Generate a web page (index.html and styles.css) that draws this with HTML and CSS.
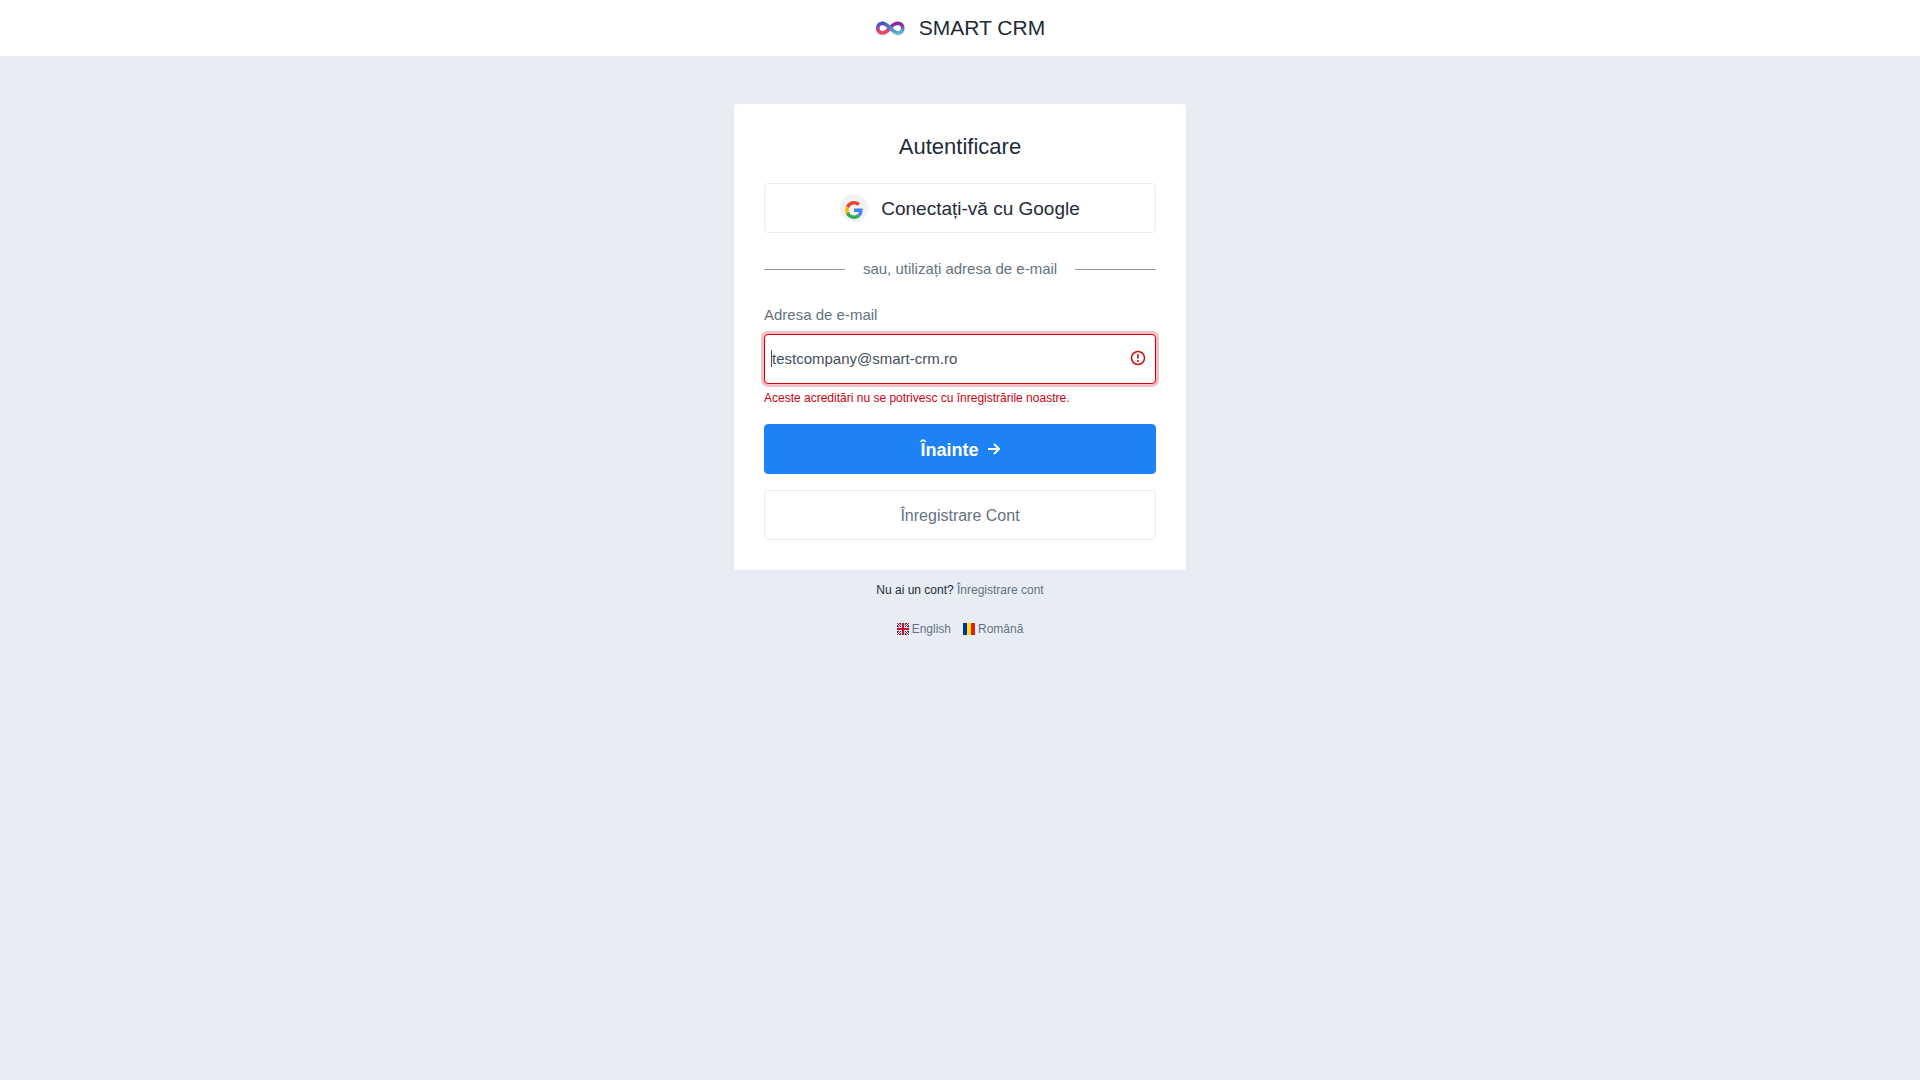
FILE: index.html
```html
<!DOCTYPE html>
<html lang="ro">
<head>
<meta charset="utf-8">
<meta name="viewport" content="width=device-width, initial-scale=1">
<title>Autentificare - SMART CRM</title>
<link rel="stylesheet" href="styles.css">
</head>
<body>
<header class="topbar">
  <a class="brand" href="#">
    <svg class="brand-logo" viewBox="0 0 30 18" aria-hidden="true">
      <defs>
        <linearGradient id="left" x1="0" y1="0" x2="0" y2="1">
          <stop offset="0.15" stop-color="#5a4fc0"/>
          <stop offset="0.5" stop-color="#8a4aa8"/>
          <stop offset="0.85" stop-color="#ee4560"/>
        </linearGradient>
        <linearGradient id="right" x1="0" y1="0" x2="0" y2="1">
          <stop offset="0.15" stop-color="#8a2c9c"/>
          <stop offset="0.5" stop-color="#6a62b8"/>
          <stop offset="0.85" stop-color="#5cb4cc"/>
        </linearGradient>
        <linearGradient id="strand" x1="0" y1="0" x2="1" y2="1">
          <stop offset="0" stop-color="#4b50c4"/>
          <stop offset="1" stop-color="#5ab2cc"/>
        </linearGradient>
      </defs>
      <g fill="none" stroke-width="3.600" stroke-linecap="round">
        <g stroke="#b4b6c0" transform="translate(0 1)" opacity=".6">
          <path d="M15 9C12 12.500 10.500 13.800 7.500 13.800A4.800 4.800 0 0 1 7.500 4.200"/>
          <path d="M7.500 4.200C13 4.200 17.500 13.800 23 13.800A4.800 4.800 0 0 0 23 4.200"/>
        </g>
        <path d="M15 9C18 5.500 19.500 4.200 23 4.200A4.800 4.800 0 0 1 23 13.800" stroke="url(#right)"/>
        <path d="M15 9C12 12.500 10.500 13.800 7.500 13.800A4.800 4.800 0 0 1 7.500 4.200" stroke="url(#left)"/>
        <path d="M7.500 4.200C13 4.200 17.500 13.800 23 13.800" stroke="url(#strand)"/>
      </g>
    </svg>
    <span>SMART CRM</span>
  </a>
</header>
<main class="page">
  <section class="card">
    <h1 class="title">Autentificare</h1>
    <button class="btn btn-google" type="button">
      <span class="google-badge">
        <svg class="google-mark" viewBox="0 0 48 48" aria-hidden="true">
          <path fill="#EA4335" d="M24 9.500c3.540 0 6.710 1.220 9.210 3.600l6.850-6.850C35.900 2.380 30.470 0 24 0 14.620 0 6.510 5.380 2.560 13.220l7.980 6.190C12.430 13.720 17.740 9.500 24 9.500z"/>
          <path fill="#4285F4" d="M46.980 24.550c0-1.570-.15-3.090-.38-4.550H24v9.020h12.940c-.58 2.960-2.260 5.480-4.780 7.180l7.730 6c4.510-4.180 7.090-10.360 7.090-17.650z"/>
          <path fill="#FBBC05" d="M10.530 28.590c-.48-1.450-.76-2.990-.76-4.590s.27-3.140.76-4.590l-7.980-6.190C.92 16.460 0 20.120 0 24c0 3.880.92 7.540 2.560 10.780l7.970-6.190z"/>
          <path fill="#34A853" d="M24 48c6.480 0 11.930-2.130 15.890-5.810l-7.730-6c-2.150 1.450-4.920 2.300-8.160 2.300-6.260 0-11.570-4.220-13.470-9.910l-7.980 6.190C6.510 42.620 14.620 48 24 48z"/>
        </svg>
      </span>
      <span>Conectați-vă cu Google</span>
    </button>
    <p class="divider">sau, utilizați adresa de e-mail</p>
    <form class="form">
      <label class="label" for="email">Adresa de e-mail</label>
      <div class="field">
        <input class="input" id="email" type="email" placeholder="testcompany@smart-crm.ro" aria-invalid="true" aria-describedby="email-error" autofocus>
        <svg class="field-icon" viewBox="0 0 16 16" aria-hidden="true">
          <circle cx="8" cy="8" r="6.500" fill="none" stroke="#cd0a12" stroke-width="1.500"/>
          <path d="M8 4.300v4.200" stroke="#cd0a12" stroke-width="1.700"/>
          <circle cx="8" cy="10.900" r="1" fill="#cd0a12"/>
        </svg>
      </div>
      <p class="error" id="email-error">Aceste acreditări nu se potrivesc cu înregistrările noastre.</p>
      <button class="btn btn-primary" type="button">
        <span>Înainte</span>
        <svg class="arrow" viewBox="0 0 12 12" aria-hidden="true"><path d="M0 6h10.500M6 1l5 5-5 5" fill="none" stroke="#fff" stroke-width="2"/></svg>
      </button>
      <button class="btn btn-outline" type="button">Înregistrare Cont</button>
    </form>
  </section>
  <p class="signup">Nu ai un cont? <a href="#">Înregistrare cont</a></p>
  <nav class="langs" aria-label="Limba">
    <a class="lang" href="#">
      <svg class="flag" viewBox="0 0 12 12" aria-hidden="true">
        <path fill="#1f2f6f" d="M0 0h12v12H0z"/>
        <path d="M0 0l12 12M12 0L0 12" stroke="#fff" stroke-width="2.200"/>
        <path d="M0 0l12 12M12 0L0 12" stroke="#c8102e" stroke-width="1"/>
        <path d="M6 0v12M0 6h12" stroke="#fff" stroke-width="3.600"/>
        <path d="M6 0v12M0 6h12" stroke="#c8102e" stroke-width="2.200"/>
      </svg>
      <span>English</span>
    </a>
    <a class="lang" href="#">
      <svg class="flag" viewBox="0 0 12 12" aria-hidden="true">
        <path fill="#00319c" d="M0 0h4v12H0z"/>
        <path fill="#ffde00" d="M4 0h4v12H4z"/>
        <path fill="#de2110" d="M8 0h4v12H8z"/>
      </svg>
      <span>Română</span>
    </a>
  </nav>
</main>
</body>
</html>
```
FILE: styles.css
```css
* {
  box-sizing: border-box;
}

body {
  margin: 0;
  min-height: 100vh;
  background: #e8edf5;
  color: #232b38;
  font-family: "Liberation Sans", Arial, sans-serif;
  font-size: 15px;
  line-height: 20px;
}

h1,
p {
  margin: 0;
}

a {
  color: #637381;
  text-decoration: none;
}

.topbar {
  display: flex;
  justify-content: center;
  align-items: center;
  height: 56px;
  background: #fff;
}

.brand {
  display: flex;
  align-items: center;
  gap: 14px;
  color: #212b36;
  font-size: 21px;
}

.brand-logo {
  width: 30px;
  height: 18px;
}

.page {
  display: flex;
  flex-direction: column;
  align-items: center;
  padding: 48px 16px;
}

.card {
  width: 100%;
  max-width: 452px;
  padding: 30px;
  border-radius: 3px;
  background: #fff;
}

.title {
  margin-bottom: 23px;
  font-size: 22px;
  font-weight: 400;
  line-height: 26px;
  text-align: center;
}

.btn {
  display: flex;
  justify-content: center;
  align-items: center;
  width: 100%;
  height: 50px;
  padding: 2px 16px 0;
  border: 1px solid #e8edf5;
  border-radius: 4px;
  background: #fff;
  color: #232b38;
  font-family: inherit;
  cursor: pointer;
}

.btn-google {
  gap: 13px;
  font-size: 19px;
}

.google-badge {
  display: flex;
  justify-content: center;
  align-items: center;
  width: 28px;
  height: 28px;
  margin-bottom: 2px;
  padding-top: 4px;
  border-radius: 50%;
  background: #f2f2f2;
}

.google-mark {
  width: 18px;
  height: 18px;
}

.divider {
  display: flex;
  align-items: center;
  gap: 18px;
  margin: 26px 0;
  color: #637381;
}

.divider::before,
.divider::after {
  content: "";
  flex: 1;
  height: 1px;
  background: #919eab;
}

.label {
  display: block;
  margin-bottom: 9px;
  color: #637381;
}

.field {
  position: relative;
}

.input {
  display: block;
  width: 100%;
  height: 50px;
  padding: 0 40px 2px 7px;
  border: 1px solid #d80008;
  border-radius: 4px;
  outline: 0;
  background: #fff linear-gradient(#454f5b, #454f5b) 6px 15px / 1px 17px no-repeat;
  box-shadow: 0 0 0 3px #f5bfc1;
  caret-color: transparent;
  color: #454f5b;
  font: inherit;
}

.input::placeholder {
  color: #454f5b;
}

.field-icon {
  position: absolute;
  top: 16px;
  right: 10px;
  width: 16px;
  height: 16px;
}

.error {
  margin: 4px 0 16px;
  color: #cd0012;
  font-size: 12px;
}

.btn-primary {
  gap: 9px;
  margin-bottom: 16px;
  border-color: #1e82f7;
  background: #1e82f7;
  color: #fff;
  font-size: 18px;
  font-weight: 700;
}

.arrow {
  width: 12px;
  height: 12px;
  margin-bottom: 2px;
}

.btn-outline {
  color: #637381;
  font-size: 16px;
}

.signup {
  margin-top: 10px;
  font-size: 12px;
}

.langs {
  display: flex;
  gap: 12px;
  margin-top: 19px;
  font-size: 12px;
}

.lang {
  display: flex;
  align-items: center;
  gap: 3px;
}

.flag {
  width: 12px;
  height: 12px;
}
```
